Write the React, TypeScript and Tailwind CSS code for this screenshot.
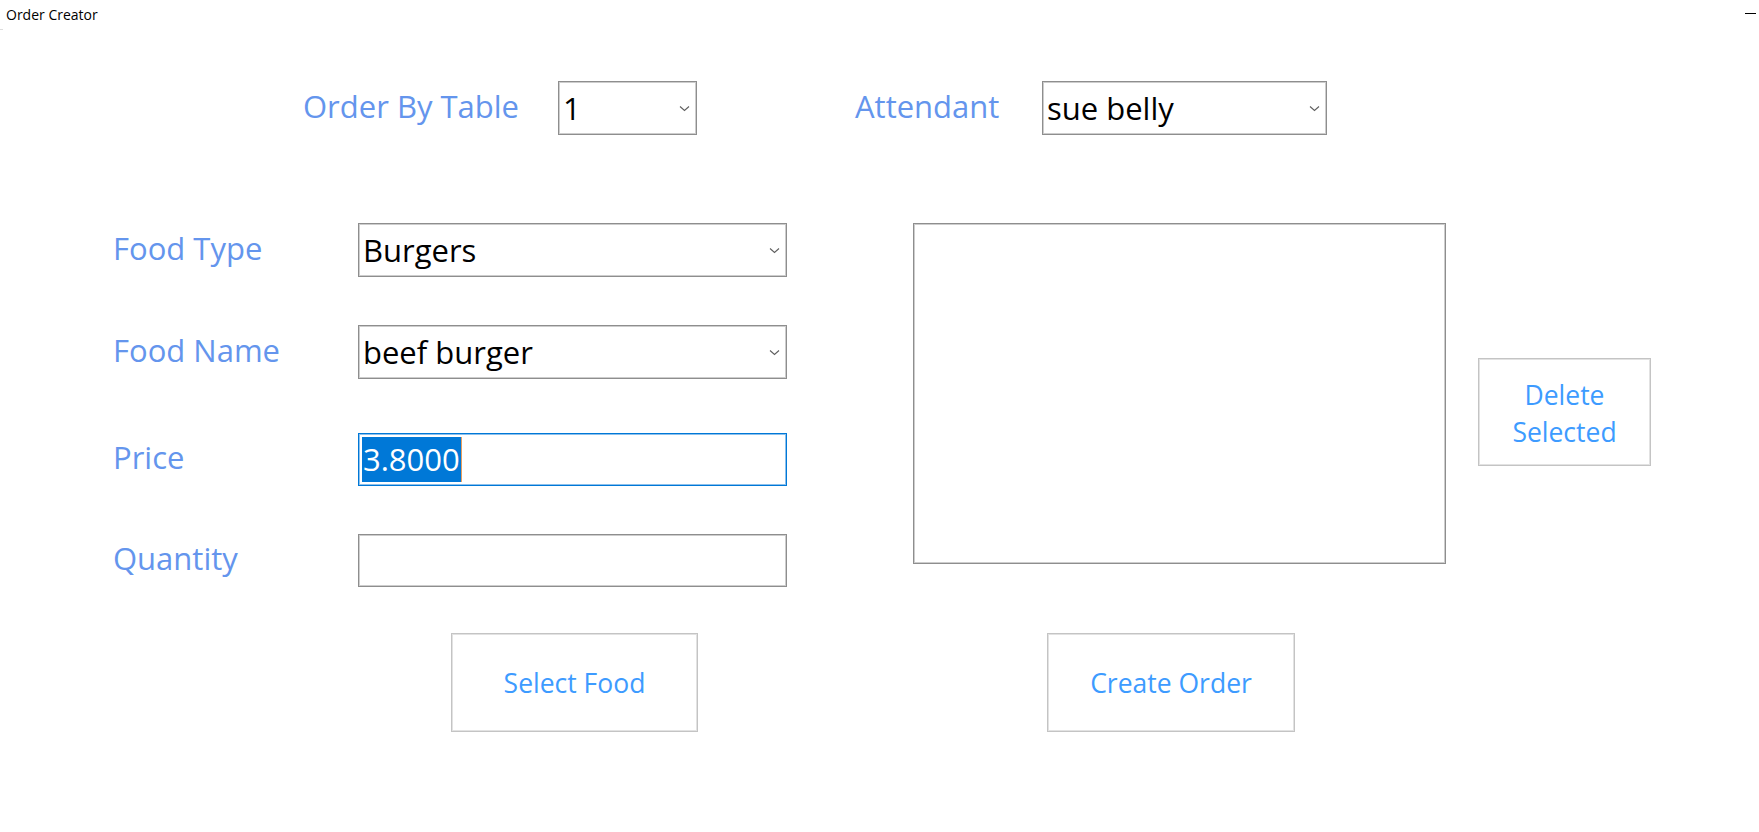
import React from "react";

const font = { fontFamily: '"Open Sans", "Noto Sans", sans-serif' };

function Chevron() {
  return (
    <svg width="11" height="7" viewBox="0 0 11 7" className="shrink-0">
      <path d="M1 1.5 L5.5 5.5 L10 1.5" fill="none" stroke="#5f5f5f" strokeWidth="1.1" />
    </svg>
  );
}

function Combo({ value, width }: { value: string; width: string }) {
  return (
    <div
      className={`${width} h-[54px] flex items-center justify-between pl-[4px] pr-[6px] pt-[1px] border border-[#8e8e8e] shadow-[inset_0_0_0_1px_#cdcdcd] bg-white`}
    >
      <span className="text-[31px] text-black leading-normal">{value}</span>
      <Chevron />
    </div>
  );
}

function Label({ text, width }: { text: string; width: string }) {
  return (
    <div className={`${width} shrink-0 pb-[4px]`}>
      <span className="text-[31px] text-[#6495ED] leading-normal whitespace-nowrap">{text}</span>
    </div>
  );
}

function Btn({ children, className }: { children: React.ReactNode; className: string }) {
  return (
    <div
      className={`${className} flex items-center justify-center text-center pt-[3px] border border-[#c4c4c4] shadow-[inset_0_0_0_1px_#e2e2e2] bg-white text-[26.5px] text-[#3d9bff]`}
    >
      {children}
    </div>
  );
}

export default function App() {
  return (
    <div className="w-[1759px] h-[832px] bg-white overflow-hidden" style={font}>
      {/* title bar */}
      <div className="h-[30px] flex justify-between">
        <div className="flex flex-col">
          <span className="pl-[6px] pt-[5px] text-[14px] leading-[19px] text-black">Order Creator</span>
          <div className="mt-[5px] w-[3px] h-px bg-[#dcdcdc]" />
        </div>
        <div className="mt-[13px] mr-[3px] w-[11px] h-px bg-black" />
      </div>

      {/* row 1 */}
      <div className="mt-[51px] pl-[303px] flex items-center h-[54px]">
        <Label text="Order By Table" width="w-[255px]" />
        <Combo value="1" width="w-[139px]" />
        <div className="ml-[158px] flex items-center">
          <Label text="Attendant" width="w-[187px]" />
          <Combo value="sue belly" width="w-[285px]" />
        </div>
      </div>

      {/* body */}
      <div className="mt-[88px] pl-[113px] flex items-start">
        <div className="w-[674px] flex flex-col">
          <div className="flex items-center h-[54px]">
            <Label text="Food Type" width="w-[245px]" />
            <Combo value="Burgers" width="w-[429px]" />
          </div>
          <div className="mt-[48px] flex items-center h-[54px]">
            <Label text="Food Name" width="w-[245px]" />
            <Combo value="beef burger" width="w-[429px]" />
          </div>
          <div className="mt-[54px] flex items-center h-[53px]">
            <Label text="Price" width="w-[245px]" />
            <div className="w-[429px] h-[53px] flex items-center pl-[3px] border border-[#0078d7] shadow-[inset_0_0_0_1px_#8cc0ec] bg-white">
              <span className="h-[45px] leading-[45px] text-[31px] text-white bg-[#0078d7] pl-[1px] pr-[1px]">3.8000</span>
              <span className="w-px h-[45px] bg-[#e8a060]" />
            </div>
          </div>
          <div className="mt-[48px] flex items-center h-[53px]">
            <Label text="Quantity" width="w-[245px]" />
            <div className="w-[429px] h-[53px] border border-[#8e8e8e] shadow-[inset_0_0_0_1px_#cdcdcd] bg-white" />
          </div>
        </div>

        <div className="ml-[126px] w-[533px] h-[341px] border border-[#8e8e8e] shadow-[inset_0_0_0_1px_#cdcdcd] bg-white" />

        <Btn className="ml-[32px] mt-[135px] w-[173px] h-[108px] leading-[37px]">
          <span>
            Delete
            <br />
            Selected
          </span>
        </Btn>
      </div>

      {/* bottom buttons */}
      <div className="mt-[46px] pl-[451px] flex">
        <Btn className="w-[247px] h-[99px]">Select Food</Btn>
        <Btn className="ml-[349px] w-[248px] h-[99px]">Create Order</Btn>
      </div>
    </div>
  );
}
